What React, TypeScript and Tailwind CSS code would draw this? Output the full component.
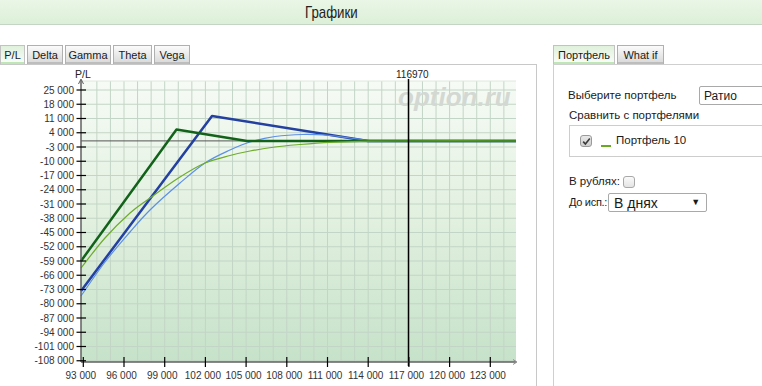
import React from 'react';

// chart scale (page coords)
const xOf = (v: number) => 83.3 + ((v - 93000) / 3000) * 40.7;
const yOf = (v: number) => 90 + ((25000 - v) / 7000) * 14.25;

const PLOT = { left: 81, right: 516, top: 81, bottom: 362 };

const fmt = (n: number) => {
  const s = Math.abs(n).toString().replace(/\B(?=(\d{3})+(?!\d))/g, ' ');
  return (n < 0 ? '-' : '') + s;
};

function smooth(pts: number[][]) {
  let d = `M${pts[0][0]},${pts[0][1]}`;
  for (let i = 0; i < pts.length - 1; i++) {
    const p0 = pts[i - 1] || pts[i];
    const p1 = pts[i];
    const p2 = pts[i + 1];
    const p3 = pts[i + 2] || p2;
    const c1x = p1[0] + (p2[0] - p0[0]) / 6;
    const c1y = p1[1] + (p2[1] - p0[1]) / 6;
    const c2x = p2[0] - (p3[0] - p1[0]) / 6;
    const c2y = p2[1] - (p3[1] - p1[1]) / 6;
    d += ` C${c1x.toFixed(1)},${c1y.toFixed(1)} ${c2x.toFixed(1)},${c2y.toFixed(1)} ${p2[0]},${p2[1]}`;
  }
  return d;
}

const lightBlue = [
  [81, 296], [105, 262], [130, 232], [150, 210], [180, 183], [205, 163], [230, 150],
  [250, 142], [275, 136.5], [303, 134.5], [330, 135.5], [350, 138], [370, 140.5], [400, 141], [516, 141],
];
const lightGreen = [
  [81, 268], [105, 238], [130, 213], [150, 198], [180, 177], [205, 163], [230, 155.5],
  [250, 151], [275, 147], [300, 144.5], [330, 142.3], [360, 141.3], [400, 141], [516, 141],
];

function Chart() {
  const yTicks: number[] = [];
  for (let v = 25000; v >= -108000; v -= 7000) yTicks.push(v);
  const xTicks: number[] = [];
  for (let v = 93000; v <= 123000; v += 3000) xTicks.push(v);
  const xGrid: number[] = [];
  for (let v = 94000; xOf(v) < PLOT.right; v += 1000) xGrid.push(xOf(v));

  return (
    <svg width="536" height="321" className="block">
      <defs>
        <linearGradient id="plotbg" x1="0" y1="0" x2="0" y2="1">
          <stop offset="0" stopColor="#f6fbf5" />
          <stop offset="0.5" stopColor="#e1f0df" />
          <stop offset="1" stopColor="#c6e2c9" />
        </linearGradient>
      </defs>
      <g transform="translate(0,-65)" fontFamily='"Liberation Sans", Arial, sans-serif'>
        <rect
          x={PLOT.left}
          y={PLOT.top}
          width={PLOT.right - PLOT.left}
          height={PLOT.bottom - PLOT.top}
          fill="url(#plotbg)"
        />
        {/* grid */}
        {xGrid.map((x) => (
          <line key={'gx' + x} x1={x} x2={x} y1={PLOT.top} y2={PLOT.bottom} stroke="#c3d5c6" strokeWidth="1" />
        ))}
        {yTicks.map((v) => (
          <line key={'gy' + v} x1={PLOT.left} x2={PLOT.right} y1={yOf(v)} y2={yOf(v)} stroke="#c3d5c6" strokeWidth="1" />
        ))}
        <line x1={PLOT.left} x2={PLOT.right} y1={PLOT.top} y2={PLOT.top} stroke="#dfe8df" />

        {/* watermark */}
        <text x="398" y="106" fontSize="26" fontWeight="bold" fontStyle="italic" fill="#d3d8d3">
          option.ru
        </text>

        {/* zero line */}
        <line x1={PLOT.left} x2={PLOT.right} y1={yOf(0)} y2={yOf(0)} stroke="#555" strokeWidth="1" />

        {/* curves */}
        <polyline points="81,291 212,116 368,141 516,141" fill="none" stroke="#2440a0" strokeWidth="2.5" strokeLinejoin="round" />
        <path d={smooth(lightBlue)} fill="none" stroke="#5c8fe6" strokeWidth="1.2" />
        <polyline points="81,261 176.5,129.5 247,141 516,141" fill="none" stroke="#12621a" strokeWidth="2.5" strokeLinejoin="round" />
        <path d={smooth(lightGreen)} fill="none" stroke="#6eac2c" strokeWidth="1.2" />

        {/* spot line */}
        <line x1="408.5" x2="408.5" y1={PLOT.top - 2} y2={PLOT.bottom + 4} stroke="#000" strokeWidth="1.5" />
        <text x="396" y="78" fontSize="10" fill="#222">
          116970
        </text>

        {/* axes */}
        <line x1={PLOT.left} x2={PLOT.left} y1={PLOT.top - 1} y2={PLOT.bottom} stroke="#606060" strokeWidth="1.5" />
        <path d="M78.5,84 L81,79 L83.5,84" fill="none" stroke="#606060" strokeWidth="1" />
        <line x1={PLOT.left} x2={PLOT.right} y1={PLOT.bottom} y2={PLOT.bottom} stroke="#606060" strokeWidth="1.5" />
        <path d="M513,359.5 L517,362 L513,364.5" fill="none" stroke="#909090" strokeWidth="1" />
        <text x="75" y="78" fontSize="10.5" fill="#222">
          P/L
        </text>

        {yTicks.map((v) => (
          <g key={'yt' + v}>
            <line x1="76.5" x2="86" y1={yOf(v)} y2={yOf(v)} stroke="#000" strokeWidth="1.2" />
            <text x="74" y={yOf(v) + 3.5} fontSize="10" textAnchor="end" fill="#333">
              {fmt(v)}
            </text>
          </g>
        ))}
        {xTicks.map((v) => (
          <g key={'xt' + v}>
            <line x1={xOf(v)} x2={xOf(v)} y1="357" y2="367" stroke="#000" strokeWidth="1.2" />
            <text x={xOf(v) - 2.5} y="379" fontSize="10" textAnchor="middle" fill="#333">
              {fmt(v)}
            </text>
          </g>
        ))}
      </g>
    </svg>
  );
}

function Tab({ label, active, w }: { label: string; active?: boolean; w: string }) {
  return (
    <div
      className={`${w} h-[19px] flex items-center justify-center border border-b-0 text-[11px] leading-none text-[#1a1a1a] ${
        active
          ? 'border-[#c2c2c2] bg-gradient-to-b from-[#dff1db] to-[#fbfdfb] shadow-[inset_0_-2px_0_#bfe6b6]'
          : 'border-[#b0b0b0] bg-gradient-to-b from-[#fbfbfb] to-[#d7d7d7] shadow-[inset_0_-2px_0_#bdbdbd]'
      }`}
    >
      {label}
    </div>
  );
}

function CheckBox({ checked }: { checked?: boolean }) {
  return (
    <div
      className={`w-[12px] h-[12px] rounded-[3px] border flex items-center justify-center ${
        checked ? 'border-[#9a9a9a] bg-gradient-to-b from-[#e8e8e8] to-[#cfcfcf]' : 'border-[#a8a8a8] bg-gradient-to-b from-[#fafafa] to-[#e4e4e4]'
      }`}
    >
      {checked && (
        <svg width="9" height="9" viewBox="0 0 9 9">
          <path d="M1.2,4.6 L3.4,7 L7.8,1.6" fill="none" stroke="#3a3a3a" strokeWidth="1.6" />
        </svg>
      )}
    </div>
  );
}

export default function App() {
  return (
    <div className="w-[762px] h-[386px] overflow-hidden bg-white font-['Liberation_Sans',Arial,sans-serif] text-[#1a1a1a]">
      {/* Header */}
      <div className="h-[25px] border-b border-[#c5d5c3] bg-gradient-to-b from-[#eaf6e7] to-[#dcefd8] flex items-center pl-[305px]">
        <span className="text-[17px] leading-none text-[#222] font-['Liberation_Sans_Narrow','Liberation_Sans',sans-serif] origin-left scale-x-[0.78] inline-block">
          Графики
        </span>
      </div>

      <div className="flex pt-[20px]">
        {/* Left: chart */}
        <div className="w-[537px] shrink-0">
          <div className="flex gap-[2px] h-[19px]">
            <Tab label="P/L" active w="w-[25px]" />
            <Tab label="Delta" w="w-[36px]" />
            <Tab label="Gamma" w="w-[46px]" />
            <Tab label="Theta" w="w-[39px]" />
            <Tab label="Vega" w="w-[36px]" />
          </div>
          <div className="border-t border-r border-[#c8c8c8] h-[322px]">
            <Chart />
          </div>
        </div>

        {/* Right: portfolio */}
        <div className="ml-[16px] flex-1">
          <div className="flex gap-[2px] h-[19px]">
            <Tab label="Портфель" active w="w-[62px]" />
            <Tab label="What if" w="w-[47px]" />
          </div>
          <div className="border-t border-l border-[#cfcfcf] h-[322px] pl-[14px] text-[11.5px] leading-none">
            <div className="mt-[21px] flex items-center h-[19px]">
              <span className="w-[131px] shrink-0">Выберите портфель</span>
              <div className="h-[19px] w-[80px] shrink-0 border border-[#a9a9a9] rounded-[2px] pl-[4px] flex items-center text-[12px]">
                Ратио
              </div>
            </div>
            <div className="mt-[4px] h-[14px] flex items-center pl-[1px]">Сравнить с портфелями</div>
            <div className="mt-[2px] ml-[1px] h-[32px] border border-[#cdcdcd] flex items-center pl-[10px]">
              <CheckBox checked />
              <div className="ml-[9px] w-[10px] h-[2px] bg-[#6aaa20] mt-[10px]" />
              <span className="ml-[5px]">Портфель 10</span>
            </div>
            <div className="mt-[18px] h-[14px] flex items-center pl-[1px]">
              <span className="w-[54px] shrink-0 whitespace-nowrap">В рублях:</span>
              <CheckBox />
            </div>
            <div className="mt-[4px] flex items-center pl-[1px]">
              <span className="whitespace-nowrap tracking-[-0.3px] text-[11px] mr-[1px]">До исп.:</span>
              <div className="h-[19px] w-[99px] shrink-0 border border-[#a9a9a9] rounded-[2px] pl-[5px] pr-[6px] flex items-center justify-between text-[14px]">
                <span>В днях</span>
                <span className="text-[9px]">▼</span>
              </div>
            </div>
          </div>
        </div>
      </div>
    </div>
  );
}
